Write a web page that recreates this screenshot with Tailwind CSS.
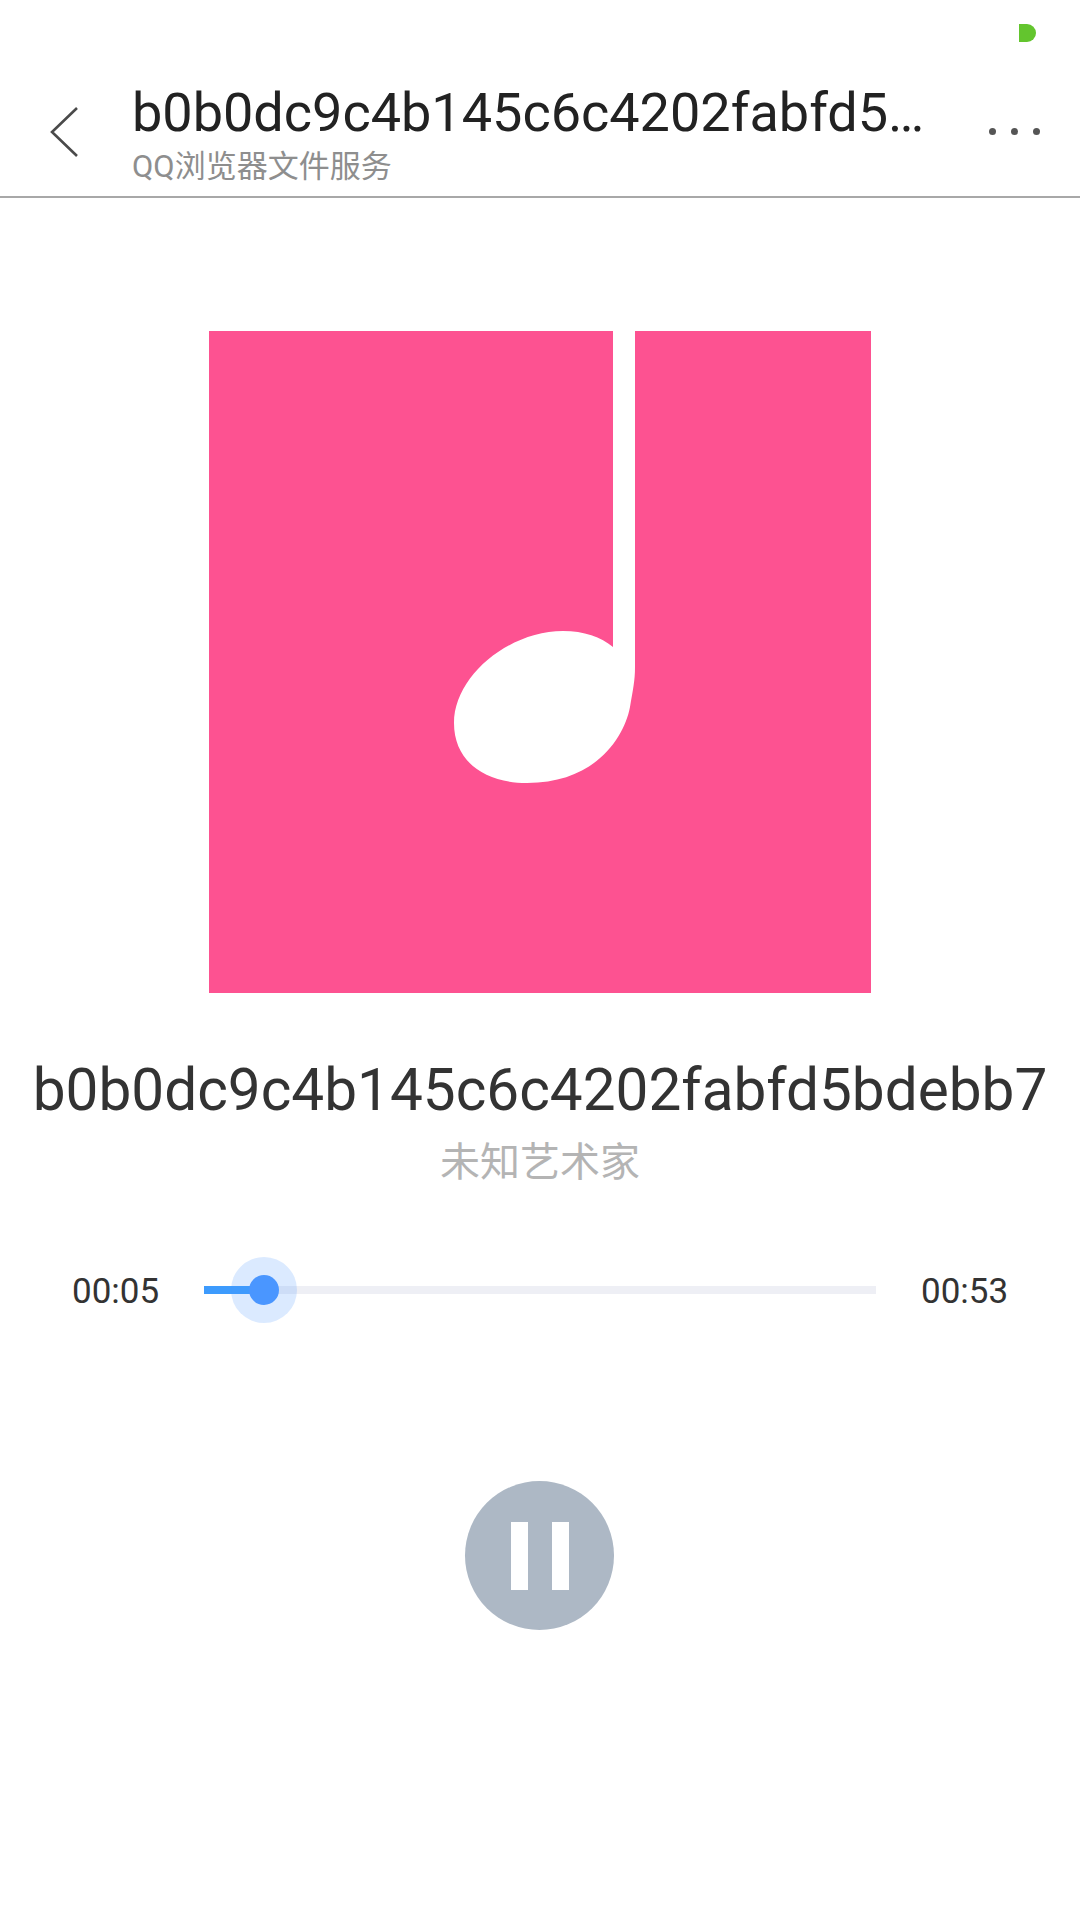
<!DOCTYPE html>
<html lang="zh">
<head>
<meta charset="UTF-8" />
<meta name="viewport" content="width=device-width, initial-scale=1.0" />
<title>QQ浏览器文件服务</title>
<script src="https://cdn.jsdelivr.net/npm/@tailwindcss/browser@4"></script>
</head>
<body class="bg-white w-[1080px] h-[1920px] overflow-hidden font-['Roboto','Noto_Sans_CJK_SC',sans-serif]">

  <!-- status bar -->
  <div class="h-[60px] pt-6 pr-11 flex justify-end">
    <div class="w-[17px] h-[18px] bg-[#63c52e] rounded-r-full rounded-l-[3px]"></div>
  </div>

  <!-- nav -->
  <nav class="h-[138px] flex items-start border-b-2 border-[#a8a8a8]">
    <svg class="w-[29px] h-[50px] ml-[50px] mt-[47px] shrink-0" viewBox="0 0 29 50" fill="none" stroke="#4a4a4a" stroke-width="2.6">
      <path d="M27 1 L2 25 L27 49" />
    </svg>
    <div class="ml-[53px] w-[800px] shrink-0">
      <div class="truncate text-[54px] leading-[60px] mt-[23px] text-[#222]">b0b0dc9c4b145c6c4202fabfd5bdebb7</div>
      <div class="text-[31px] leading-[40px] mt-[4px] text-[#8e8e8e]">QQ浏览器文件服务</div>
    </div>
    <div class="flex gap-[15px] ml-[57px] mt-[68px]">
      <span class="w-[7px] h-[7px] rounded-full bg-[#555]"></span>
      <span class="w-[7px] h-[7px] rounded-full bg-[#555]"></span>
      <span class="w-[7px] h-[7px] rounded-full bg-[#555]"></span>
    </div>
  </nav>

  <main>
    <!-- cover -->
    <div class="w-[662px] h-[662px] ml-[209px] mt-[133px] bg-[#fd5291]">
      <svg class="w-full h-full" viewBox="0 0 662 662" fill="#fff">
        <path d="M404 0 H426 V336 C426 350 424 358 421 376 C415 408 385 452 318 452 C275 452 245 430 245 392 C245 345 300 300 354 300 C375 300 392 306 404 316 Z" />
      </svg>
    </div>

    <!-- track -->
    <div class="text-center text-[58.5px] leading-[70px] mt-[62px] text-[#333] whitespace-nowrap">b0b0dc9c4b145c6c4202fabfd5bdebb7</div>
    <div class="text-center text-[40px] leading-[50px] mt-[13px] text-[#b4b4b4]">未知艺术家</div>

    <!-- progress -->
    <div class="flex items-center h-[66px] mt-[69px]">
      <span class="w-[204px] pl-[72px] mt-[4px] text-[35px] text-[#333]">00:05</span>
      <div class="relative w-[672px] h-2 bg-[#eeeff5]">
        <div class="h-full w-[60px] bg-[#3d9bfd]"></div>
        <div class="absolute left-[27px] top-[-29px] w-[66px] h-[66px] rounded-full bg-[#4a96ff]/20"></div>
        <div class="absolute left-[45px] top-[-11px] w-[30px] h-[30px] rounded-full bg-[#4a96ff]"></div>
      </div>
      <span class="pl-[45px] mt-[4px] text-[35px] text-[#333]">00:53</span>
    </div>

    <!-- pause -->
    <div class="w-[149px] h-[149px] ml-[465px] mt-[158px] rounded-full bg-[#adb8c5] flex items-center justify-center gap-[24px]">
      <span class="w-[17px] h-[68px] bg-white"></span>
      <span class="w-[17px] h-[68px] bg-white"></span>
    </div>
  </main>

</body>
</html>
